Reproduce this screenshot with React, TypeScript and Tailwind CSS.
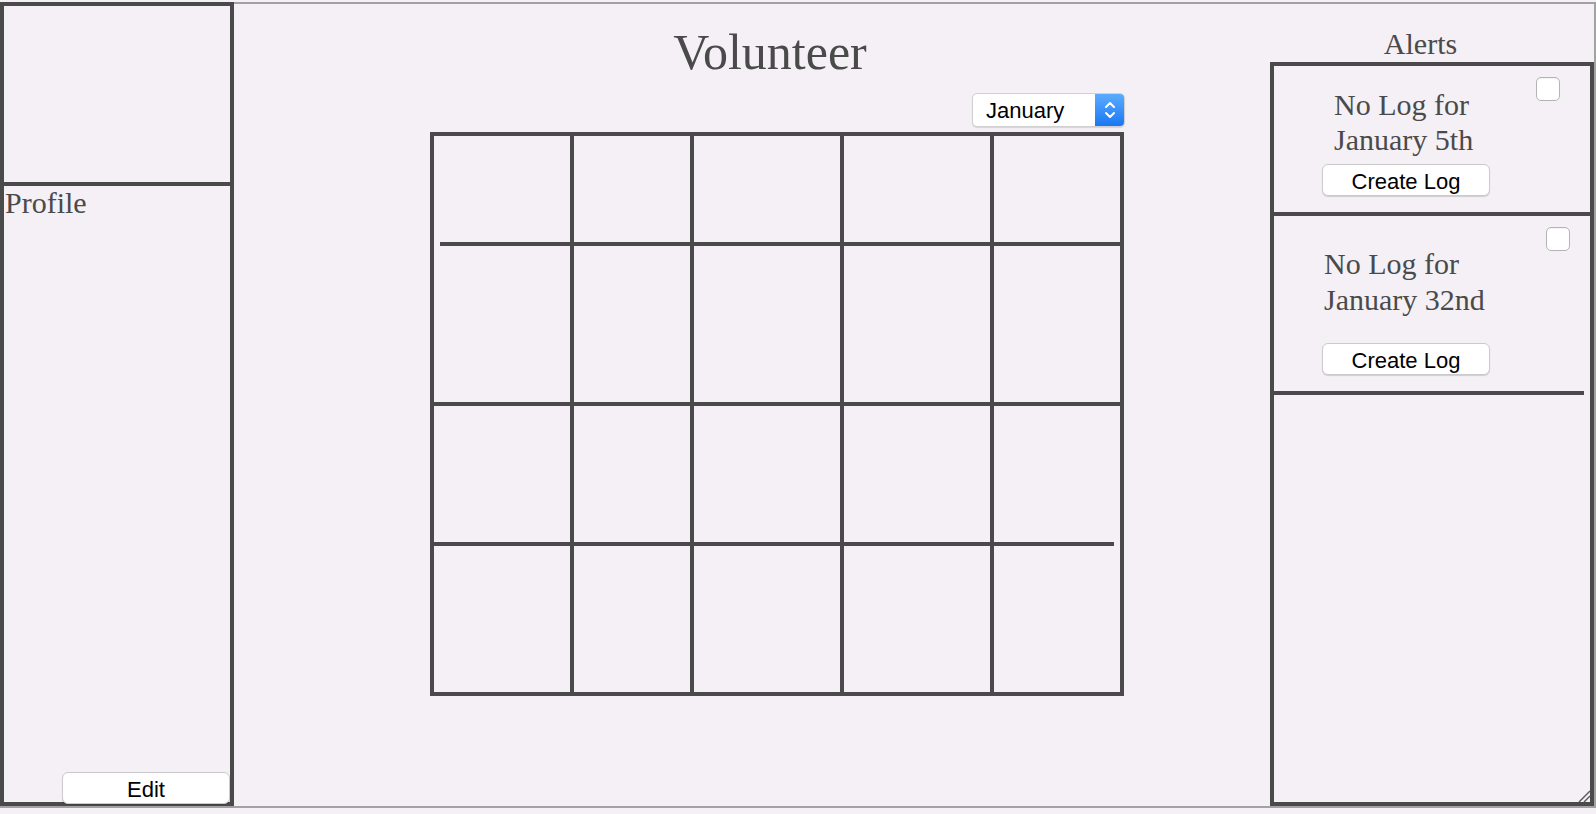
import React from "react";

const serif = "font-['Liberation_Serif','Times_New_Roman',serif]";
const sans = "font-['Liberation_Sans',Arial,sans-serif]";

function PillButton({ label, className = "" }: { label: string; className?: string }) {
  return (
    <button
      className={`${sans} flex h-[32px] w-[168px] items-center justify-center rounded-[6px] border border-[#cbcbcb] bg-white pt-[3px] text-[22px] leading-none text-black shadow-[0_1px_1px_rgba(0,0,0,0.15)] ${className}`}
    >
      {label}
    </button>
  );
}

function Checkbox({ className = "" }: { className?: string }) {
  return (
    <span
      className={`absolute h-[24px] w-[24px] rounded-[5px] border border-[#b4b4b4] bg-white shadow-[inset_0_1px_1px_rgba(0,0,0,0.05)] ${className}`}
    />
  );
}

const widths = ["w-[140px]", "w-[120px]", "w-[150px]", "w-[150px]", "w-[126px]"];

function CalRow({ height }: { height: string }) {
  return (
    <div className={`flex ${height}`}>
      {widths.map((w, i) => (
        <div
          key={i}
          className={`${w} shrink-0 ${i < 4 ? "border-r-4 border-[#4a4a4a]" : ""}`}
        />
      ))}
    </div>
  );
}

function Calendar() {
  return (
    <div className="ml-[196px] mt-[5px] flex h-[564px] w-[694px] flex-col border-4 border-[#4a4a4a]">
      <CalRow height="h-[106px]" />
      <div className="ml-[6px] h-1 bg-[#4a4a4a]" />
      <CalRow height="h-[156px]" />
      <div className="h-1 bg-[#4a4a4a]" />
      <CalRow height="h-[136px]" />
      <div className="mr-[6px] h-1 bg-[#4a4a4a]" />
      <CalRow height="h-[146px]" />
    </div>
  );
}

function MonthSelect() {
  return (
    <div className="ml-[738px] mt-[16px] flex h-[34px] w-[153px] overflow-hidden rounded-[5px] border border-[#d0d0d0] bg-white shadow-[0_1px_1px_rgba(0,0,0,0.12)]">
      <span className={`${sans} flex flex-1 items-center pl-[13px] pt-[2px] text-[22px] leading-none text-black`}>
        January
      </span>
      <span className="flex w-[29px] items-center justify-center bg-gradient-to-b from-[#5aabff] to-[#1977f3]">
        <svg width="12" height="20" viewBox="0 0 12 20" fill="none" stroke="white" strokeWidth="2" strokeLinecap="round" strokeLinejoin="round">
          <path d="M2 7 L6 3 L10 7" />
          <path d="M2 13 L6 17 L10 13" />
        </svg>
      </span>
    </div>
  );
}

export default function App() {
  return (
    <div className={`h-[814px] w-[1596px] overflow-hidden bg-[#f4f0f5] pt-[2px] text-[#4a4a4a] ${serif}`}>
      <div className="flex h-[806px] border-b-2 border-r-2 border-t-2 border-[#a2a2a2]">
        {/* profile column */}
        <aside className="-mt-[2px] flex h-[804px] w-[234px] shrink-0 flex-col border-4 border-[#4a4a4a]">
          <div className="h-[180px] shrink-0 border-b-4 border-[#4a4a4a]" />
          <div className="flex flex-1 flex-col justify-between">
            <div className="pl-px text-[30px] leading-[34px]">Profile</div>
            <PillButton label="Edit" className="-mb-[2px] ml-auto" />
          </div>
        </aside>

        {/* main */}
        <main className="flex flex-1 flex-col">
          <h1 className="mt-[23px] pl-[36px] text-center text-[50px] leading-[50px]">Volunteer</h1>
          <MonthSelect />
          <Calendar />
        </main>

        {/* alerts column */}
        <section className="flex w-[324px] shrink-0 flex-col">
          <div className="h-[58px] pr-[23px] pt-[23px] text-center text-[30px] leading-[34px]">Alerts</div>
          <div className="relative flex flex-1 flex-col border-4 border-[#4a4a4a]">
            <div className="relative h-[150px] border-b-4 border-[#4a4a4a] pt-[21px]">
              <Checkbox className="right-[30px] top-[11px]" />
              <p className="pl-[60px] text-[30px] leading-[35px]">
                No Log for
                <br />
                January 5th
              </p>
              <PillButton label="Create Log" className="ml-[48px] mt-[7px]" />
            </div>
            <div className="relative h-[175px] pt-[30px]">
              <Checkbox className="right-[20px] top-[11px]" />
              <p className="pl-[50px] text-[30px] leading-[36px]">
                No Log for
                <br />
                January 32nd
              </p>
              <PillButton label="Create Log" className="ml-[48px] mt-[25px]" />
            </div>
            <div className="mr-[6px] h-1 bg-[#4a4a4a]" />
            <svg className="absolute bottom-0 right-0" width="12" height="12" viewBox="0 0 12 12" stroke="#5a5a5a" strokeWidth="1.5">
              <path d="M1 12 L12 1" />
              <path d="M6 12 L12 6" />
            </svg>
          </div>
        </section>
      </div>
    </div>
  );
}
